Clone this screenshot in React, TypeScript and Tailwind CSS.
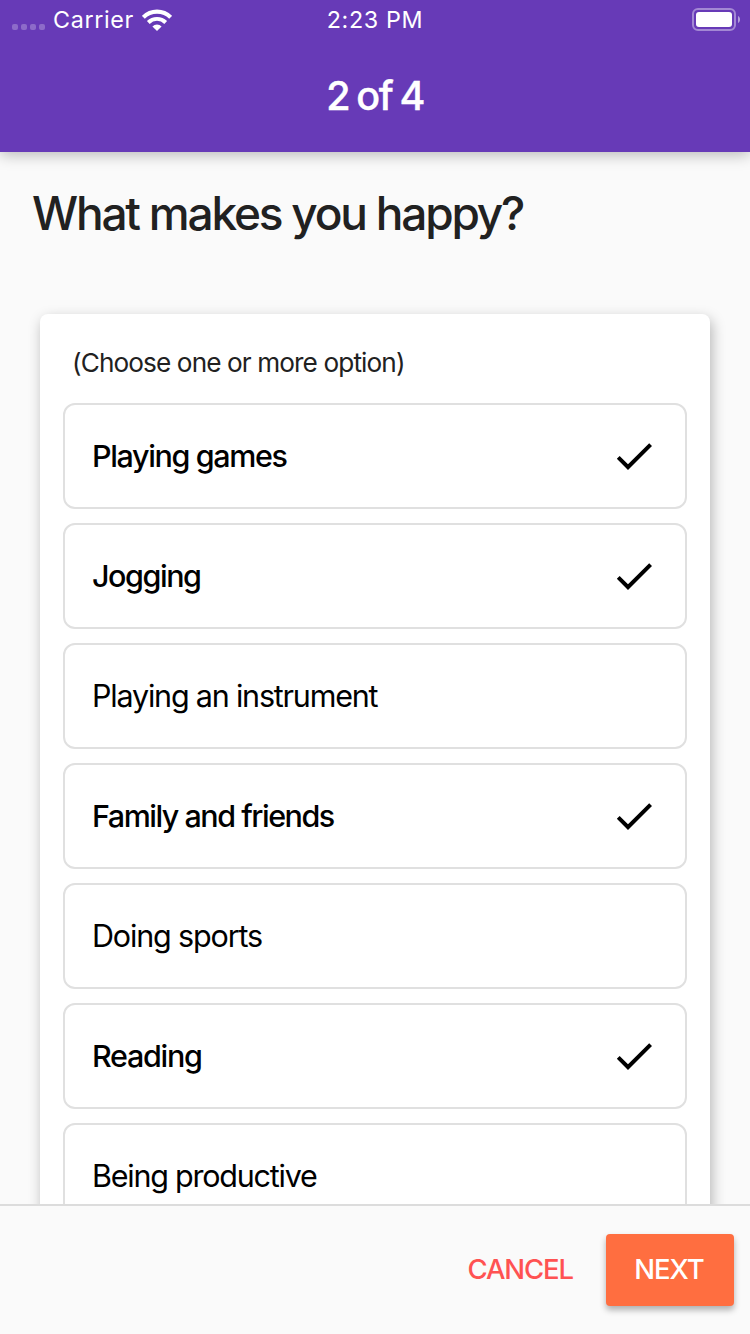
import React from "react";

type Option = { label: string; selected: boolean; tracking: string };

const options: Option[] = [
  { label: "Playing games", selected: true, tracking: "tracking-[-1.36px]" },
  { label: "Jogging", selected: true, tracking: "tracking-[-1.46px]" },
  { label: "Playing an instrument", selected: false, tracking: "tracking-[-1.2px]" },
  { label: "Family and friends", selected: true, tracking: "tracking-[-1.49px]" },
  { label: "Doing sports", selected: false, tracking: "tracking-[-1.15px]" },
  { label: "Reading", selected: true, tracking: "tracking-[-1.28px]" },
  { label: "Being productive", selected: false, tracking: "tracking-[-1.23px]" },
];

function Wifi() {
  return (
    <svg width="30" height="22" viewBox="0 0 30 22" fill="none" stroke="#fff">
      <path d="M1.3 8.3a19.4 19.4 0 0 1 27.4 0" strokeWidth="4.2" />
      <path d="M6.3 13.5a12.3 12.3 0 0 1 17.4 0" strokeWidth="3.9" />
      <path d="M15 22l-4.6-4.6a6.5 6.5 0 0 1 9.2 0z" fill="#fff" stroke="none" />
    </svg>
  );
}

function Battery() {
  return (
    <svg width="48" height="24" viewBox="0 0 48 24">
      <rect x="1" y="1" width="42" height="21" rx="5" fill="none" stroke="#fff" strokeOpacity="0.4" strokeWidth="2" />
      <rect x="4" y="4" width="36" height="15" rx="3" fill="#fff" />
      <path d="M46 8c2.7 1.2 2.7 5.8 0 7z" fill="#fff" fillOpacity="0.5" />
    </svg>
  );
}

function StatusBar() {
  return (
    <div className="grid h-10 grid-cols-3 items-center text-[23.3px] leading-10 tracking-[0.65px]">
      <div className="flex items-center pl-3">
        <div className="flex gap-[3px] pt-3.5">
          {[0, 1, 2, 3].map((i) => (
            <span key={i} className="size-1.5 rounded-[2px] bg-white/25" />
          ))}
        </div>
        <span className="ml-2 mr-[8.5px]">Carrier</span>
        <Wifi />
      </div>
      <div className="text-center">2:23 PM</div>
      <div className="flex justify-end pr-2.5">
        <Battery />
      </div>
    </div>
  );
}

function OptionRow({ label, selected, tracking }: Option) {
  return (
    <li
      className={`flex h-[106px] shrink-0 items-center justify-between rounded-xl border-2 border-[#e0e0e0] px-[27px] text-[30.5px] text-black ${tracking} ${selected ? "font-medium" : "font-normal"}`}
    >
      <span>{label}</span>
      {selected && (
        <svg width="48" height="48" viewBox="0 0 24 24" fill="#000">
          <path d="M9 16.17L4.83 12l-1.42 1.41L9 19 21 7l-1.41-1.41z" />
        </svg>
      )}
    </li>
  );
}

export default function App() {
  return (
    <div className="flex h-[1334px] w-[750px] flex-col overflow-hidden bg-[#fafafa] font-['Inter','Liberation_Sans',sans-serif] text-[#212121]">
      <header className="z-10 h-[152px] shrink-0 bg-[#673ab7] text-white shadow-[0_3px_14px_rgba(0,0,0,0.26)]">
        <StatusBar />
        <h1 className="text-center text-[39.5px] font-medium leading-[112px] tracking-[-1.6px] [word-spacing:-1.5px] [-webkit-text-stroke:0.4px_white]">2 of 4</h1>
      </header>
      <main className="flex min-h-0 flex-1 flex-col overflow-hidden">
        <h2 className="mt-[31px] pl-8 text-[46px] font-[450] leading-[61px] tracking-[-2.2px]">What makes you happy?</h2>
        <section className="mx-10 mt-[70px] flex shrink-0 flex-col rounded-lg bg-white px-[23px] shadow-[2px_5px_14px_rgba(0,0,0,0.28)]">
          <p className="pl-[9px] pt-8 text-[26.2px] leading-[34px] tracking-[-0.9px]">(Choose one or more option)</p>
          <ul className="mt-[23px] flex flex-col gap-3.5 pb-6">
            {options.map((o) => (
              <OptionRow key={o.label} {...o} />
            ))}
          </ul>
        </section>
      </main>
      <footer className="flex h-[130px] shrink-0 items-start justify-end border-t-2 border-[#dcdcdc] bg-[#fafafa] pr-4 pt-7 text-[27.5px] font-medium leading-[70px]">
        <button className="mr-[33px] tracking-[-1.1px] text-[#ff5252]">CANCEL</button>
        <button className="h-[72px] w-32 rounded bg-[#ff6e40] pb-0.5 pr-0.5 tracking-[-1px] text-white shadow-[0_4px_6px_rgba(0,0,0,0.3)]">NEXT</button>
      </footer>
    </div>
  );
}
